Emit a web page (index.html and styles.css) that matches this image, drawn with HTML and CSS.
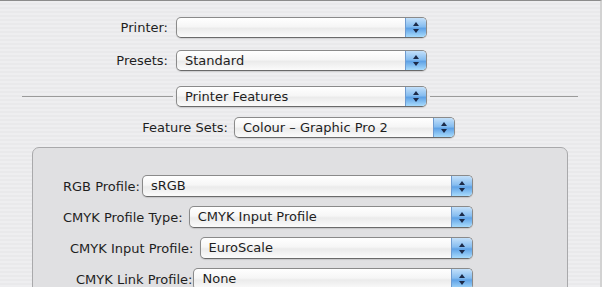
FILE: index.html
```html
<!DOCTYPE html>
<html lang="en">

<head>
    <meta charset="UTF-8">
    <meta name="viewport" content="width=device-width, initial-scale=1.0">
    <title>Print</title>
    <link rel="stylesheet" href="styles.css">
</head>

<body>
    <div class="sheet">
        <div class="row">
            <span class="label wide">Printer:</span>
            <div class="popup main"><span class="value"></span><span class="arrows"><svg width="6" height="11" viewBox="0 0 6 11"><path d="M3 0 L6 4 L0 4 Z M0 7 L6 7 L3 11 Z" fill="#1c2a48"/></svg></span></div>
        </div>

        <div class="row">
            <span class="label wide">Presets:</span>
            <div class="popup main"><span class="value">Standard</span><span class="arrows"><svg width="6" height="11" viewBox="0 0 6 11"><path d="M3 0 L6 4 L0 4 Z M0 7 L6 7 L3 11 Z" fill="#1c2a48"/></svg></span></div>
        </div>

        <div class="row divider">
            <span class="rule left"></span>
            <div class="popup main"><span class="value">Printer Features</span><span class="arrows"><svg width="6" height="11" viewBox="0 0 6 11"><path d="M3 0 L6 4 L0 4 Z M0 7 L6 7 L3 11 Z" fill="#1c2a48"/></svg></span></div>
            <span class="rule right"></span>
        </div>

        <div class="row sets-row">
            <span class="label features">Feature Sets:</span>
            <div class="popup sets"><span class="value">Colour – Graphic Pro 2</span><span class="arrows"><svg width="6" height="11" viewBox="0 0 6 11"><path d="M3 0 L6 4 L0 4 Z M0 7 L6 7 L3 11 Z" fill="#1c2a48"/></svg></span></div>
        </div>

        <!-- Feature set options -->
        <div class="group">
            <div class="grow rgb">
                <span class="label">RGB Profile:</span>
                <div class="popup"><span class="value">sRGB</span><span class="arrows"><svg width="6" height="11" viewBox="0 0 6 11"><path d="M3 0 L6 4 L0 4 Z M0 7 L6 7 L3 11 Z" fill="#1c2a48"/></svg></span></div>
            </div>
            <div class="grow type">
                <span class="label">CMYK Profile Type:</span>
                <div class="popup"><span class="value">CMYK Input Profile</span><span class="arrows"><svg width="6" height="11" viewBox="0 0 6 11"><path d="M3 0 L6 4 L0 4 Z M0 7 L6 7 L3 11 Z" fill="#1c2a48"/></svg></span></div>
            </div>
            <div class="grow input">
                <span class="label">CMYK Input Profile:</span>
                <div class="popup"><span class="value">EuroScale</span><span class="arrows"><svg width="6" height="11" viewBox="0 0 6 11"><path d="M3 0 L6 4 L0 4 Z M0 7 L6 7 L3 11 Z" fill="#1c2a48"/></svg></span></div>
            </div>
            <div class="grow link">
                <span class="label">CMYK Link Profile:</span>
                <div class="popup"><span class="value">None</span><span class="arrows"><svg width="6" height="11" viewBox="0 0 6 11"><path d="M3 0 L6 4 L0 4 Z M0 7 L6 7 L3 11 Z" fill="#1c2a48"/></svg></span></div>
            </div>
        </div>
    </div>
</body>

</html>
```
FILE: styles.css
```css
body {
    margin: 0;
    font-family: 'DejaVu Sans', sans-serif;
    font-size: 13px;
    color: #1e1e1e;
    background: #ececec;
    overflow: hidden;
}

.sheet {
    height: 287px;
    box-sizing: border-box;
    overflow: hidden;
    border-top: 1px solid #8c8c8c;
    border-right: 2px solid #d2d2d2;
    padding-top: 16px;
    background: repeating-linear-gradient(to bottom, #eeeef0 0, #eeeef0 2px, #e9e9eb 2px, #e9e9eb 4px);
}

.row {
    display: flex;
    align-items: center;
    height: 21px;
    margin-bottom: 12px;
}

.row.divider {
    margin-top: 15px;
    margin-bottom: 10px;
    padding-left: 22px;
}

.row.sets-row {
    margin-bottom: 9px;
}

.label {
    white-space: nowrap;
}

.label.wide {
    width: 168px;
    text-align: right;
    margin-right: 8px;
}

.label.features {
    width: 228px;
    text-align: right;
    margin-right: 6px;
}

.rule {
    height: 1px;
    background: #9a9a9a;
}

.rule.left {
    width: 151px;
    margin-right: 3px;
}

.rule.right {
    width: 148px;
    margin-left: 3px;
}

/* Aqua popup button */
.popup {
    display: flex;
    height: 21px;
    box-sizing: border-box;
    border: 1px solid #8a8a8a;
    border-bottom-color: #6a6a6a;
    border-radius: 5px;
    background: linear-gradient(to bottom, #ffffff 0%, #f6f6f6 45%, #ebebeb 55%, #fbfbfb 100%);
    box-shadow: 0 1px 1px rgba(0, 0, 0, 0.12);
    overflow: hidden;
}

.popup.main {
    width: 251px;
}

.popup.sets {
    width: 221px;
}

.popup .value {
    flex: 1;
    padding-left: 8px;
    line-height: 19px;
    white-space: nowrap;
}

.popup .arrows {
    width: 20px;
    display: flex;
    align-items: center;
    justify-content: center;
    border-left: 1px solid #6e9bd0;
    background: linear-gradient(to bottom, #c3e0fa 0%, #86bdf0 45%, #5fa2e6 55%, #a8dbfc 100%);
}

.group {
    margin-left: 32px;
    width: 536px;
    height: 150px;
    box-sizing: border-box;
    border: 1px solid #a9a9ab;
    border-radius: 7px;
    background: #e0e0e2;
    padding: 27px 94px 0 0;
}

.grow {
    display: flex;
    align-items: center;
    height: 22px;
    margin-bottom: 9px;
}

.grow .label {
    margin-right: 6px;
}

.grow .popup {
    flex: 1;
    height: 22px;
}

.grow .popup .value {
    line-height: 20px;
}

.grow.rgb,
.grow.type {
    padding-left: 30px;
}

.grow.rgb .label {
    margin-right: 2px;
}

.grow.input {
    padding-left: 37px;
}

.grow.link {
    padding-left: 43px;
}

.grow.link .label {
    margin-right: 1px;
}
```
